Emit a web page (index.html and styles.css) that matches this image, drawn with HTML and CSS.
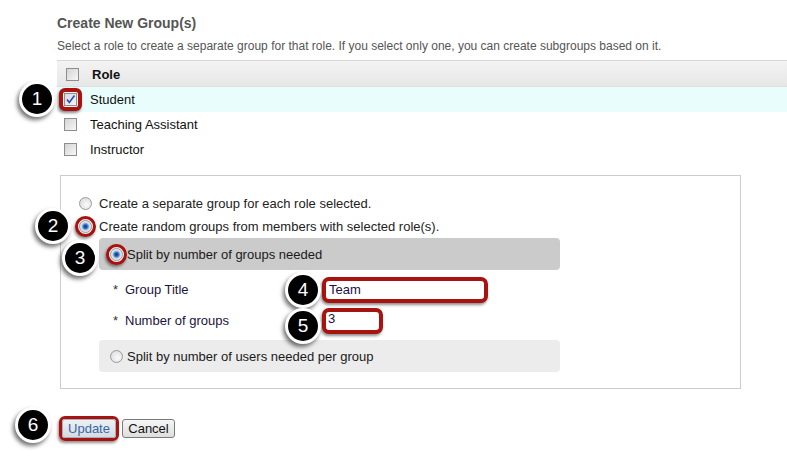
FILE: index.html
```html
<!DOCTYPE html>
<html>
<head>
<meta charset="utf-8">
<link rel="stylesheet" href="styles.css">
</head>
<body>
<div class="page">
  <h2 class="title">Create New Group(s)</h2>
  <p class="desc">Select a role to create a separate group for that role. If you select only one, you can create subgroups based on it.</p>

  <div class="roles">
    <div class="roles-head"><span class="cb"></span><span class="head-label">Role</span></div>
    <div class="role-row selected">
      <span class="ring ring-sq"><span class="cb checked"><svg width="11" height="11" viewBox="0 0 11 11"><path d="M2 5.5 L4.3 8.5 L9.5 1.5" fill="none" stroke="#2a4fb0" stroke-width="1.6"/></svg></span></span>
      <span class="role-label">Student</span>
    </div>
    <div class="role-row"><span class="cb"></span><span class="role-label">Teaching Assistant</span></div>
    <div class="role-row"><span class="cb"></span><span class="role-label">Instructor</span></div>
  </div>

  <div class="options">
    <div class="opt opt1"><span class="radio"></span><span class="opt-label">Create a separate group for each role selected.</span></div>
    <div class="opt opt2"><span class="ring ring-round"><span class="radio on"></span></span><span class="opt-label">Create random groups from members with selected role(s).</span></div>
    <div class="sub sub-active"><span class="ring ring-round"><span class="radio on"></span></span><span class="sub-label">Split by number of groups needed</span></div>
    <div class="fields">
      <div class="field"><span class="req">*</span><span class="flabel">Group Title</span><input class="hl-input input-title" type="text" value="Team"></div>
      <div class="field"><span class="req">*</span><span class="flabel">Number of groups</span><input class="hl-input input-num" type="text" value="3"></div>
    </div>
    <div class="sub sub-idle"><span class="radio"></span><span class="sub-label">Split by number of users needed per group</span></div>
  </div>

  <div class="actions">
    <span class="ring ring-btn"><button class="btn btn-update">Update</button></span>
    <button class="btn btn-cancel">Cancel</button>
  </div>

  <span class="badge b1">1</span>
  <span class="badge b2">2</span>
  <span class="badge b3">3</span>
  <span class="badge b4">4</span>
  <span class="badge b5">5</span>
  <span class="badge b6">6</span>
</div>
</body>
</html>
```

FILE: styles.css
```css
html, body {
  margin: 0;
  padding: 0;
  background: #fff;
}
body {
  font-family: "Liberation Sans", Arial, sans-serif;
  color: #222;
}
.page {
  position: relative;
  width: 787px;
  height: 468px;
  padding-left: 57px;
  box-sizing: border-box;
  overflow: hidden;
}
.title {
  margin: 15px 0 0;
  font-size: 14px;
  line-height: 16px;
  font-weight: bold;
  color: #555;
}
.desc {
  margin: 8px 0 0;
  font-size: 12px;
  line-height: 14px;
  color: #555;
}
.roles {
  margin-top: 7px;
}
.roles-head {
  display: flex;
  align-items: center;
  height: 26px;
  padding-left: 9px;
  border-top: 1px solid #d8d8d8;
  background: linear-gradient(#f3f3f3, #e6e6e6);
  box-shadow: inset 0 -1px 0 #dedede;
}
.head-label {
  margin-left: 13px;
  font-size: 13px;
  font-weight: bold;
  color: #111;
}
.role-row {
  display: flex;
  align-items: center;
  height: 25px;
  padding-left: 7px;
  font-size: 13px;
  color: #111;
}
.role-row.selected {
  background: #e9fdfd;
}
.role-label {
  margin-left: 13px;
}
.cb {
  display: inline-flex;
  align-items: center;
  justify-content: center;
  width: 13px;
  height: 13px;
  box-sizing: border-box;
  border: 1px solid #8e8e8e;
  background: linear-gradient(135deg, #d4d4d4, #f7f7f7);
  flex: none;
}
.cb.checked {
  background: linear-gradient(135deg, #d8dbe3, #f4f4f4);
}
.ring {
  display: inline-flex;
  align-items: center;
  justify-content: center;
  border: 3px solid #a8120f;
  padding: 1px;
  margin: -4px;
  flex: none;
  box-shadow: -1px 2px 3px rgba(0,0,0,0.45);
  background: #f4f4f4;
}
.ring-sq {
  border-radius: 6px;
  border-width: 4px;
  margin: -5px;
}
.ring-round {
  border-radius: 50%;
  background: #f2f2f2;
}
.ring-btn {
  border-radius: 6px;
  padding: 0;
  border-width: 3px;
  margin: -3px;
  background: transparent;
}

.options {
  width: 681px;
  box-sizing: border-box;
  margin-top: 13px;
  margin-left: 3px;
  border: 1px solid #cbcbcb;
  padding: 15px 0 16px 18px;
  font-size: 13px;
}
.opt {
  display: flex;
  align-items: center;
  color: #222;
}
.opt1 { height: 24px; }
.opt2 { height: 23px; }
.opt-label {
  margin-left: 7px;
}
.radio {
  display: inline-block;
  width: 13px;
  height: 13px;
  box-sizing: border-box;
  border-radius: 50%;
  border: 1px solid #9a9a9a;
  background: radial-gradient(circle at 60% 60%, #fbfbfb 0, #e4e4e4 60%, #cfcfcf 100%);
  flex: none;
}
.radio.on {
  background: radial-gradient(circle, #123a78 0, #1f56a8 1.5px, #5d97dc 2.8px, #a8c6ea 3.6px, #e2e2e2 4.4px, #f2f2f2 100%);
}
.sub {
  display: flex;
  align-items: center;
  height: 32px;
  width: 461px;
  box-sizing: border-box;
  margin-left: 20px;
  padding-left: 11px;
  border-radius: 4px;
}
.sub-active { background: #cbcbcb; }
.sub-idle { background: #ececec; }
.sub-label {
  margin-left: 4px;
  color: #1a1a1a;
}
.fields {
  margin: 6px 0 6px;
  display: flex;
  flex-direction: column;
  gap: 4px;
}
.field {
  display: flex;
  align-items: center;
  height: 27px;
}
.req {
  margin-left: 34px;
  width: 12px;
  color: #333;
}
.flabel {
  width: 197px;
  color: #1c1240;
}
.hl-input {
  height: 26px;
  box-sizing: border-box;
  border: 4px solid #a8120f;
  border-radius: 7px;
  padding: 0 3px;
  font-family: "Liberation Sans", Arial, sans-serif;
  font-size: 13px;
  color: #1c0c44;
  background: #fff;
  box-shadow: -1px 2px 3px rgba(0,0,0,0.45);
  outline: none;
}
.input-title { width: 166px; }
.input-num { width: 61px; padding-left: 2px; padding-top: 0; padding-bottom: 4px; }

.actions {
  display: flex;
  align-items: center;
  gap: 6px;
  margin-top: 29px;
  margin-left: 5px;
  height: 21px;
}
.btn {
  height: 19px;
  box-sizing: border-box;
  border: 1px solid #7a7a7a;
  border-radius: 3px;
  background: linear-gradient(#f6f6f6, #dedede);
  font-family: "Liberation Sans", Arial, sans-serif;
  font-size: 13px;
  line-height: 15px;
  padding: 0 5px;
  color: #111;
  margin: 0;
}
.btn-update {
  width: 54px;
  color: #3a67a8;
  border-color: #a0b0c0;
  background: linear-gradient(#eef1f4, #d6dbe0);
}
.btn-cancel {
  width: 53px;
}

.badge {
  position: absolute;
  width: 36px;
  height: 36px;
  box-sizing: border-box;
  border-radius: 50%;
  background: #000;
  border: 3px solid #fff;
  box-shadow: -2px 3px 4px rgba(0,0,0,0.55);
  color: #fff;
  font-size: 19px;
  line-height: 30px;
  text-align: center;
  font-family: "Liberation Sans", Arial, sans-serif;
}
.b1 { left: 19px; top: 81px; }
.b2 { left: 35px; top: 208px; }
.b3 { left: 62px; top: 240px; }
.b4 { left: 285px; top: 272px; }
.b5 { left: 285px; top: 308px; }
.b6 { left: 15px; top: 407px; }
```
